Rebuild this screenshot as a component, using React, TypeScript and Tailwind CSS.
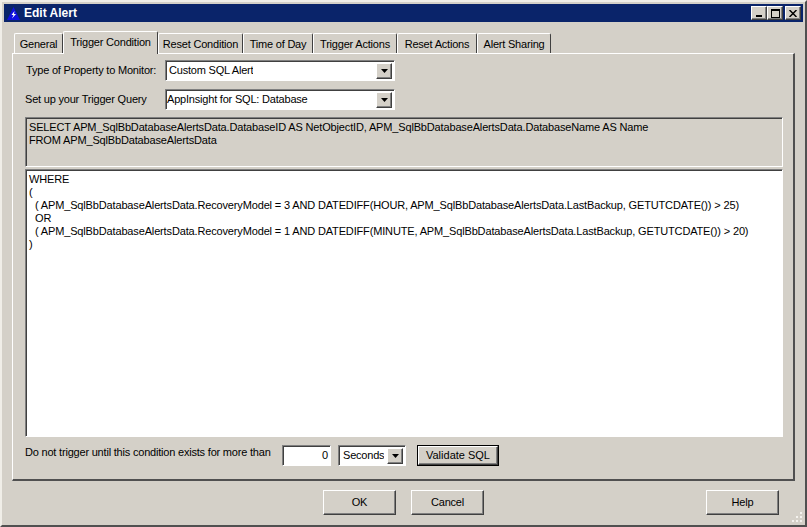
import React from 'react';

const font = "font-['Liberation_Sans',Arial,sans-serif] text-[11px] tracking-[-0.2px] text-black";
const raised = "border-t border-l border-r border-b border-t-white border-l-white border-r-[#404040] border-b-[#404040] shadow-[inset_-1px_-1px_0_#808080]";
const sunken = "border border-t-[#808080] border-l-[#808080] border-r-white border-b-white shadow-[inset_1px_1px_0_#404040]";

const tabs = [
  { label: 'General', width: 'w-[49px]' },
  { label: 'Trigger Condition', width: 'w-[95px]', active: true },
  { label: 'Reset Condition', width: 'w-[85px]' },
  { label: 'Time of Day', width: 'w-[70px]' },
  { label: 'Trigger Actions', width: 'w-[84px]' },
  { label: 'Reset Actions', width: 'w-[80px]' },
  { label: 'Alert Sharing', width: 'w-[74px]' },
];

function DropArrow() {
  return (
    <div className={`w-4 h-4 bg-[#d4d0c8] flex items-center justify-center shrink-0 ${raised}`}>
      <svg width="7" height="4" viewBox="0 0 7 4"><path d="M0 0h7L3.5 4z" fill="#000" /></svg>
    </div>
  );
}

function Combo({ text, className, textClass = 'pl-[3px]' }: { text: string; className: string; textClass?: string }) {
  return (
    <div className={`h-[21px] bg-white flex items-center justify-between pr-[2px] ${sunken} ${className}`}>
      <span className={`truncate ${textClass}`}>{text}</span>
      <DropArrow />
    </div>
  );
}

function Button({ children, className }: { children: React.ReactNode; className: string }) {
  return (
    <div className={`bg-[#d4d0c8] flex items-center justify-center ${raised} ${className}`}>{children}</div>
  );
}

function WinButton({ children, className = '' }: { children: React.ReactNode; className?: string }) {
  return (
    <div className={`w-4 h-[14px] bg-[#d4d0c8] flex items-center justify-center ${raised} ${className}`}>{children}</div>
  );
}

export default function App() {
  return (
    <div className={`w-[807px] h-[527px] bg-[#d4d0c8] overflow-hidden flex flex-col p-[4px] border-t-2 border-l-2 border-t-[#f0eee8] border-l-[#f0eee8] border-r-2 border-b-2 border-r-[#505050] border-b-[#505050] ${font}`}>
      {/* Title bar */}
      <div className="h-[18px] -mt-[2px] -mx-[2px] bg-[#0a246a] flex items-center justify-between pl-[3px] pr-[2px] shrink-0">
        <div className="flex items-center gap-[4px] text-white font-bold text-[12px] tracking-normal">
          <svg width="13" height="13" viewBox="0 0 13 13">
            <path d="M6.5 0L13 13H0z" fill="#1010e0" />
            <path d="M7.5 4L4.5 8H6.5L5 11.5L9 7H7z" fill="#fff" />
          </svg>
          <span>Edit Alert</span>
        </div>
        <div className="flex items-center">
          <WinButton>
            <div className="w-[6px] h-[2px] bg-black mt-[6px]" />
          </WinButton>
          <WinButton className="mr-[2px]">
            <div className="w-[9px] h-[9px] border border-black border-t-2" />
          </WinButton>
          <WinButton>
            <svg width="8" height="7" viewBox="0 0 8 7"><path d="M0.5 0L7.5 7M7.5 0L0.5 7" stroke="#000" strokeWidth="1.5" /></svg>
          </WinButton>
        </div>
      </div>

      {/* Tabs */}
      <div className="flex items-end h-[31px] pl-[10px] shrink-0 -ml-[2px] relative z-10">
        {tabs.map((tab) => (
          <div
            key={tab.label}
            className={`flex items-center justify-center border-t border-l border-r rounded-t-[2px] border-t-white border-l-white border-r-[#404040] bg-[#d4d0c8] ${tab.width} ${
              tab.active ? 'h-[23px] -mb-[1px] pb-[1px]' : 'h-[20px] pt-[1px]'
            }`}
          >
            {tab.label}
          </div>
        ))}
      </div>

      {/* Tab pane */}
      <div className="w-[783px] h-[428px] ml-[6px] border-t border-l border-t-white border-l-white border-r-2 border-b-2 border-r-[#505050] border-b-[#505050] flex flex-col pl-[12px] pr-[10px] shrink-0">
        <div className="flex items-center h-[21px] mt-[6px]">
          <span className="w-[140px] pl-[1px] whitespace-nowrap">Type of Property to Monitor:</span>
          <Combo text="Custom SQL Alert" className="w-[230px]" />
        </div>
        <div className="flex items-center h-[21px] mt-[8px]">
          <span className="w-[140px] whitespace-nowrap">Set up your Trigger Query</span>
          <Combo text="AppInsight for SQL: Database" className="w-[230px]" textClass="pl-[1px]" />
        </div>
        <div className={`h-[50px] mt-[7px] pl-[3px] pt-[3px] leading-[13px] tracking-[-0.155px] whitespace-nowrap ${sunken}`}>
          SELECT APM_SqlBbDatabaseAlertsData.DatabaseID AS NetObjectID, APM_SqlBbDatabaseAlertsData.DatabaseName AS Name
          <br />
          FROM APM_SqlBbDatabaseAlertsData
        </div>
        <div className={`h-[268px] mt-[2px] pl-[3px] pt-[3px] bg-white leading-[13px] tracking-[-0.15px] whitespace-nowrap ${sunken}`}>
          <div>WHERE</div>
          <div>(</div>
          <div className="pl-[6px]">( APM_SqlBbDatabaseAlertsData.RecoveryModel = 3 AND DATEDIFF(HOUR, APM_SqlBbDatabaseAlertsData.LastBackup, GETUTCDATE()) &gt; 25)</div>
          <div className="pl-[6px]">OR</div>
          <div className="pl-[6px]">( APM_SqlBbDatabaseAlertsData.RecoveryModel = 1 AND DATEDIFF(MINUTE, APM_SqlBbDatabaseAlertsData.LastBackup, GETUTCDATE()) &gt; 20)</div>
          <div>)</div>
        </div>
        <div className="flex items-center h-[21px] mt-[8px]">
          <span className="w-[257px] -mt-[7px] whitespace-nowrap">Do not trigger until this condition exists for more than</span>
          <div className={`w-[49px] h-[21px] bg-white flex items-center justify-end pr-[2px] ${sunken}`}>0</div>
          <Combo text="Seconds" className="w-[68px] ml-[7px]" textClass="pl-[4px]" />
          <div className="ml-[11px] w-[82px] h-[21px] border border-black tracking-normal">
            <Button className="w-full h-full">Validate SQL</Button>
          </div>
        </div>
      </div>

      {/* Dialog buttons */}
      <div className="flex items-center h-[25px] mt-[9px] ml-[317px] relative">
        <Button className="w-[73px] h-[25px]">OK</Button>
        <Button className="w-[73px] h-[25px] ml-[15px]">Cancel</Button>
        <Button className="w-[73px] h-[25px] ml-[222px]">Help</Button>
        {/* Resize grip */}
        <svg className="absolute -right-[2px] top-[22px]" width="12" height="12" viewBox="0 0 12 12">
          <path d="M9 0h2v2H9zM5 4h2v2H5zM9 4h2v2H9zM1 8h2v2H1zM5 8h2v2H5zM9 8h2v2H9z" fill="#f4f2ee" />
        </svg>
      </div>
    </div>
  );
}
